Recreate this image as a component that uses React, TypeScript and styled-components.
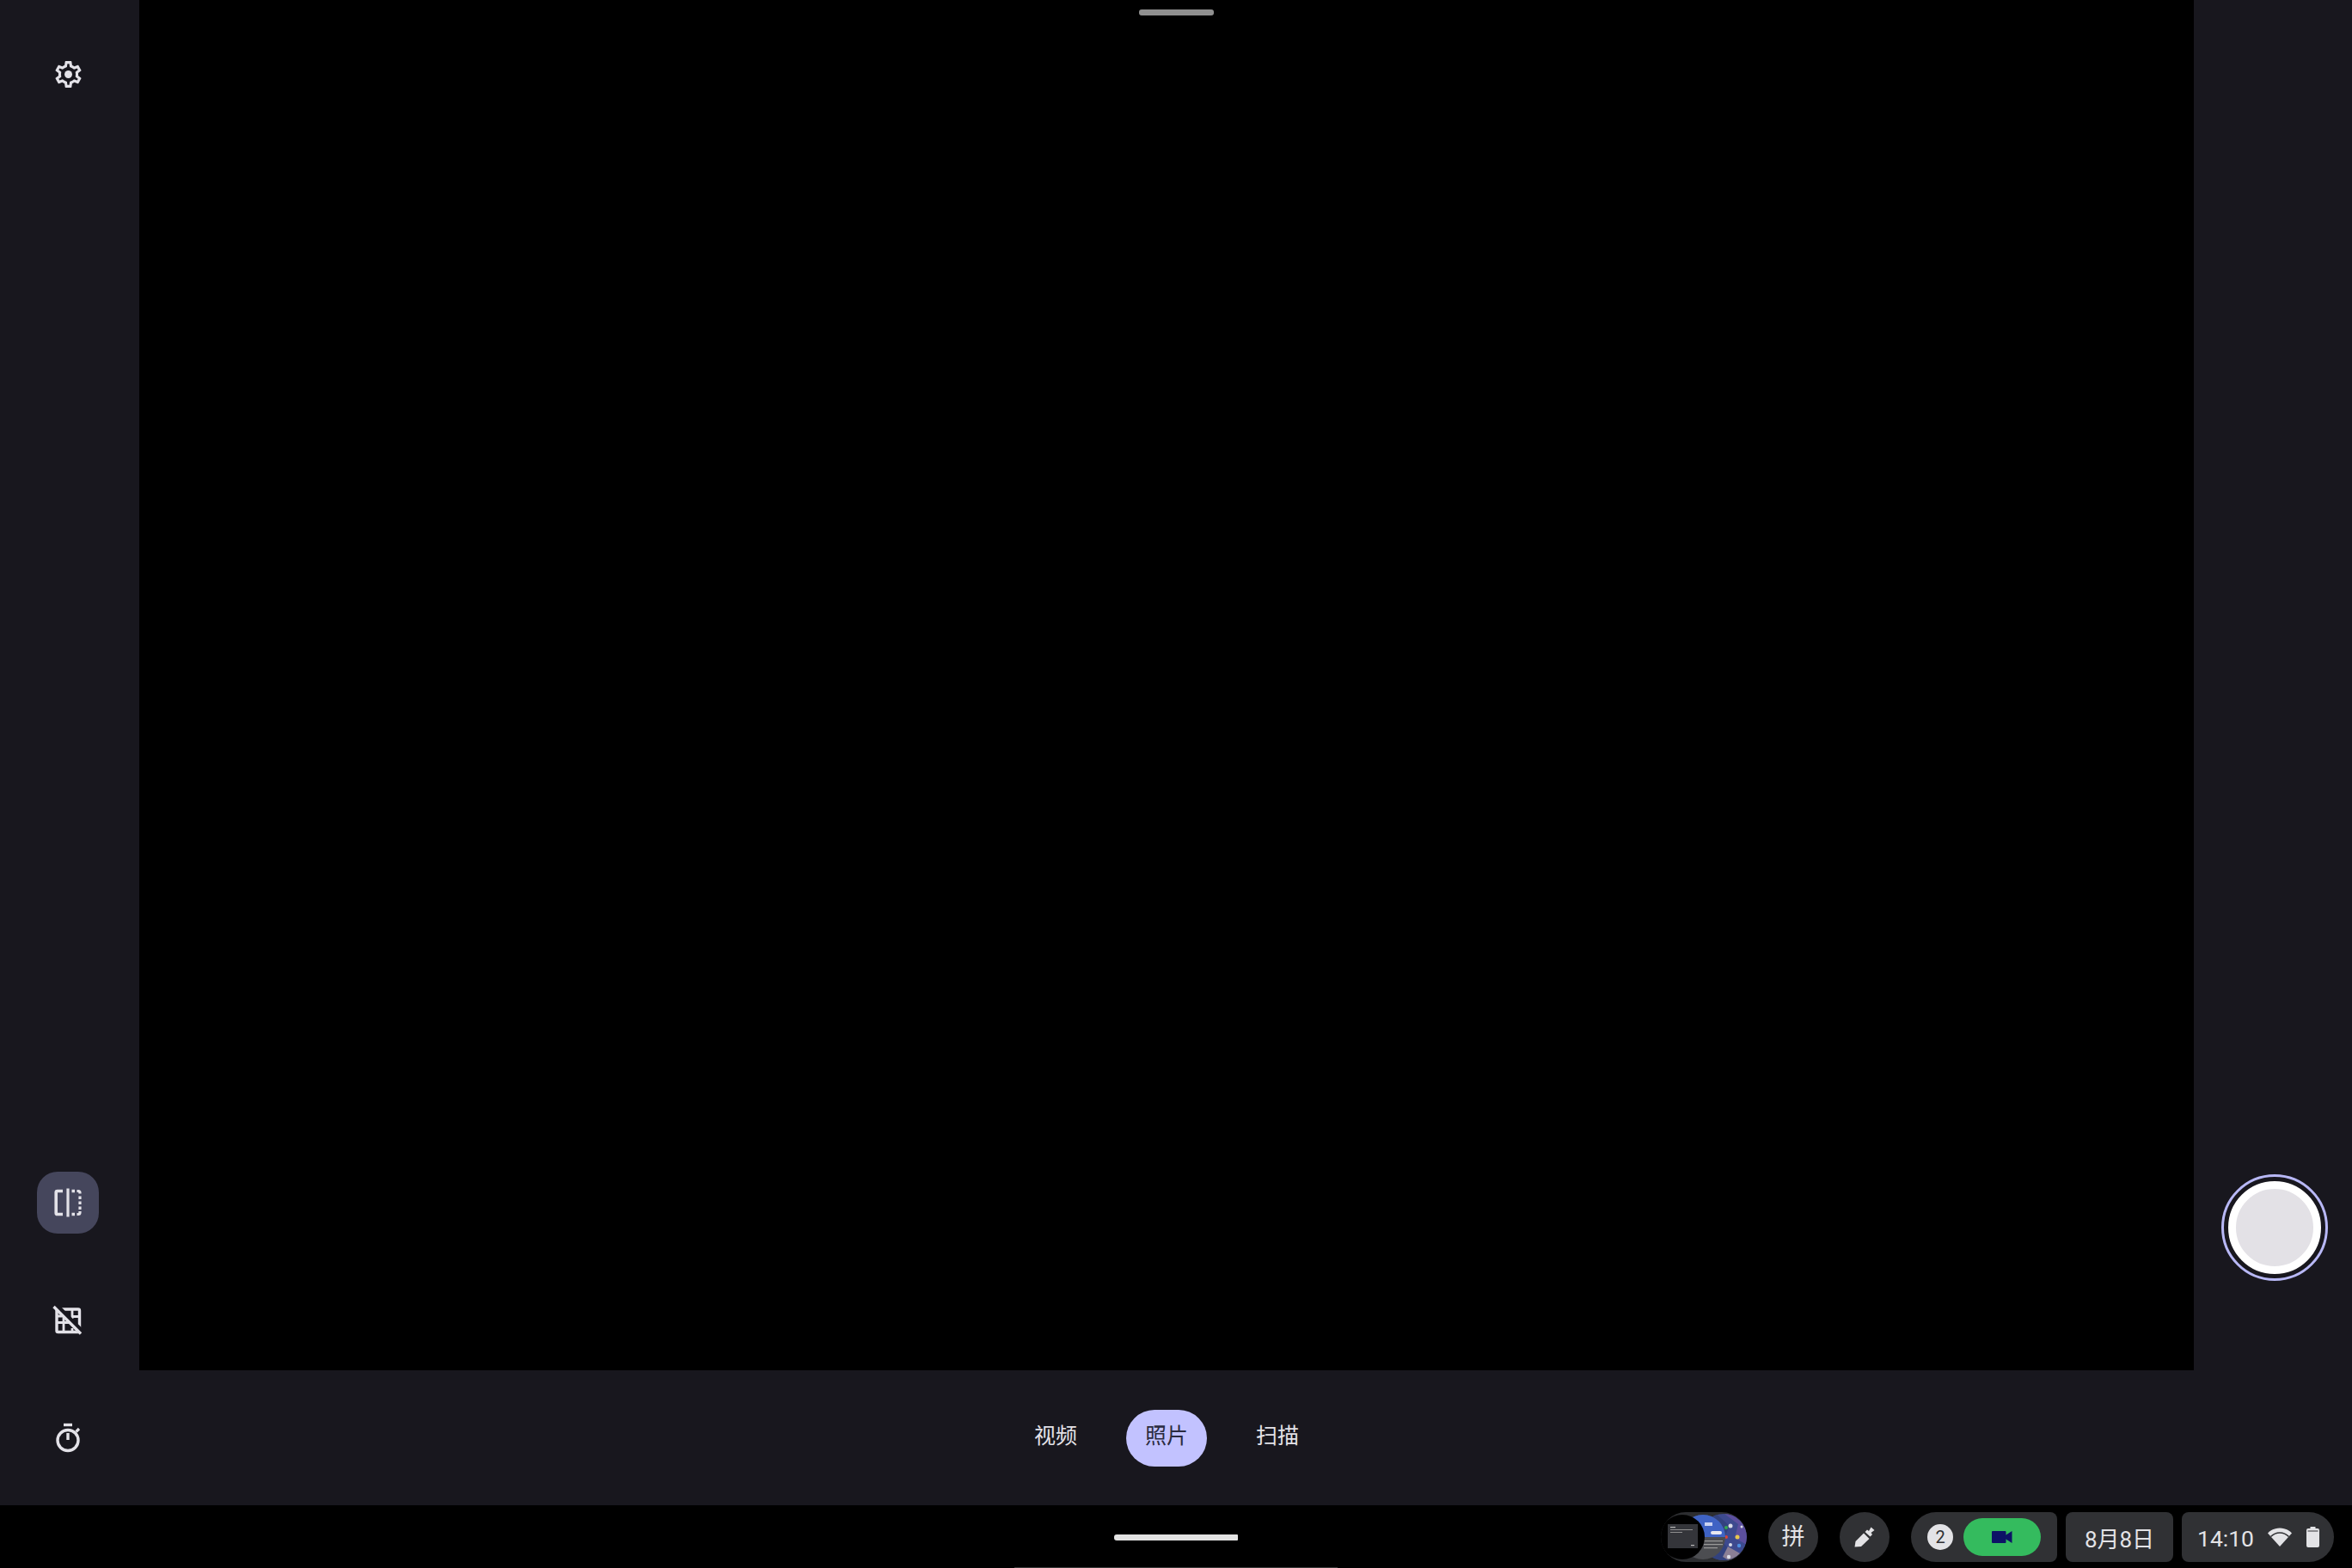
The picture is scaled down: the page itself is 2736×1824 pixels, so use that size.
import React from "react";
import styled, { createGlobalStyle } from "styled-components";

const Global = createGlobalStyle`
  html, body { margin: 0; padding: 0; background: #000; }
  body { font-family: "Roboto", "Noto Sans CJK SC", sans-serif; }
`;

const Screen = styled.div`
  position: relative;
  width: 2736px;
  height: 1824px;
  display: flex;
  flex-direction: column;
  overflow: hidden;
  background: #000;
`;

const Workspace = styled.div`
  height: 1751px;
  display: flex;
  background: #18171e;
`;

const LeftRail = styled.aside`
  width: 162px;
  display: flex;
  flex-direction: column;
  align-items: center;
  padding: 50px 4px 42px 0;
  box-sizing: border-box;
`;

const RailButton = styled.button<{ $active?: boolean }>`
  width: 72px;
  height: 72px;
  flex: none;
  padding: 0;
  border: 0;
  border-radius: 24px;
  display: flex;
  align-items: center;
  justify-content: center;
  color: #e3e2e8;
  background: ${(p) => (p.$active ? "#45465c" : "transparent")};
`;

const BottomTools = styled.div`
  margin-top: auto;
  display: flex;
  flex-direction: column;
  gap: 65px;
`;

const Center = styled.main`
  flex: 1;
  display: flex;
  flex-direction: column;
`;

const Preview = styled.div`
  position: relative;
  height: 1594px;
  background: #000;
`;

const Handle = styled.div`
  position: absolute;
  top: 11px;
  left: 1163px;
  width: 87px;
  height: 7px;
  border-radius: 3px;
  background: #8f8f8f;
`;

const ModeBar = styled.nav`
  flex: 1;
  display: flex;
  justify-content: center;
  align-items: flex-start;
  padding-top: 46px;
  gap: 35px;
`;

const Mode = styled.div<{ $active?: boolean }>`
  width: 94px;
  height: 66px;
  box-sizing: border-box;
  padding-bottom: 10px;
  border-radius: 33px;
  display: flex;
  align-items: center;
  justify-content: center;
  font-family: "Noto Sans CJK SC", sans-serif;
  font-size: 25px;
  color: ${(p) => (p.$active ? "#2b2b40" : "#e3e2e8")};
  background: ${(p) => (p.$active ? "#c2c2ff" : "transparent")};
`;

const RightRail = styled.aside`
  width: 184px;
  display: flex;
  justify-content: center;
  padding: 1366px 0 0 4px;
  box-sizing: border-box;
`;

const ShutterRing = styled.div`
  width: 124px;
  height: 124px;
  box-sizing: border-box;
  border: 3px solid #b8b8f6;
  border-radius: 50%;
  display: flex;
  align-items: center;
  justify-content: center;
`;

const ShutterFace = styled.div`
  width: 90px;
  height: 90px;
  border: 9px solid #fff;
  border-radius: 50%;
  background: #e3e1e6;
`;

const Shelf = styled.footer`
  position: relative;
  margin-top: 1px;
  height: 72px;
  display: flex;
  align-items: center;
  justify-content: flex-end;
  padding: 0 21px 0 0;
  box-sizing: border-box;
  background: #000;
`;

const HomeBar = styled.div`
  position: absolute;
  left: 1296px;
  top: 33px;
  width: 144px;
  height: 7px;
  border-radius: 3px 1px 1px 3px;
  background: #e3e3e3;
`;

const EdgeLine = styled.div`
  position: absolute;
  left: 1180px;
  bottom: 0;
  width: 376px;
  height: 1px;
  background: #3a3a3a;
`;

const Tray = styled.div`
  display: flex;
  align-items: center;
  height: 58px;
`;

const HoldingPod = styled.div`
  width: 100px;
  height: 58px;
  margin-right: 25px;
  border-radius: 29px;
  overflow: hidden;
  background: #2c2d30;
`;

const RoundPod = styled.div<{ $lift?: boolean }>`
  width: 58px;
  height: 58px;
  box-sizing: border-box;
  margin-right: 25px;
  padding-bottom: ${(p) => (p.$lift ? "6px" : "0")};
  border-radius: 50%;
  display: flex;
  align-items: center;
  justify-content: center;
  font-family: "Noto Sans CJK SC", sans-serif;
  font-size: 27px;
  color: #e3e3e6;
  background: #303134;
`;

const NotifyPod = styled.div`
  width: 170px;
  height: 58px;
  margin-right: 10px;
  box-sizing: border-box;
  padding-left: 19px;
  border-radius: 29px 8px 8px 29px;
  display: flex;
  align-items: center;
  gap: 12px;
  background: #303134;
`;

const CountBadge = styled.div`
  width: 30px;
  height: 30px;
  border-radius: 50%;
  display: flex;
  align-items: center;
  justify-content: center;
  font-size: 20px;
  color: #303134;
  background: #e3e3e6;
`;

const RecordingPill = styled.div`
  width: 90px;
  height: 44px;
  border-radius: 22px;
  display: flex;
  align-items: center;
  justify-content: center;
  background: #34bb5e;
`;

const DatePod = styled.div`
  width: 125px;
  height: 58px;
  margin-right: 10px;
  border-radius: 8px;
  display: flex;
  align-items: center;
  justify-content: center;
  font-size: 26px;
  color: #e3e3e6;
  background: #303134;
`;

const StatusPod = styled.div`
  width: 177px;
  height: 58px;
  box-sizing: border-box;
  padding-left: 18px;
  border-radius: 8px 29px 29px 8px;
  display: flex;
  align-items: center;
  font-size: 26.5px;
  color: #e3e3e6;
  background: #303134;
`;

const Clock = styled.span`
  width: 66px;
  margin-right: 15px;
  padding-top: 2px;
`;

const BatterySlot = styled.span`
  display: flex;
  margin-left: 16px;
`;

const Gear = () => (
  <svg width="37" height="37" viewBox="0 0 24 24" fill="currentColor">
    <path d="M19.43 12.98c.04-.32.07-.64.07-.98 0-.34-.03-.66-.07-.98l2.11-1.65c.19-.15.24-.42.12-.64l-2-3.46c-.09-.16-.26-.25-.44-.25-.06 0-.12.01-.17.03l-2.49 1c-.52-.4-1.08-.73-1.69-.98l-.38-2.65C14.46 2.18 14.25 2 14 2h-4c-.25 0-.46.18-.49.42l-.38 2.65c-.61.25-1.17.59-1.69.98l-2.49-1c-.06-.02-.12-.03-.18-.03-.17 0-.34.09-.43.25l-2 3.46c-.13.22-.07.49.12.64l2.11 1.65c-.04.32-.07.65-.07.98 0 .33.03.66.07.98l-2.11 1.65c-.19.15-.24.42-.12.64l2 3.46c.09.16.26.25.44.25.06 0 .12-.01.17-.03l2.49-1c.52.4 1.08.73 1.69.98l.38 2.65c.03.24.24.42.49.42h4c.25 0 .46-.18.49-.42l.38-2.65c.61-.25 1.17-.59 1.69-.98l2.49 1c.06.02.12.03.18.03.17 0 .34-.09.43-.25l2-3.46c.12-.22.07-.49-.12-.64l-2.11-1.65zm-1.98-1.71c.04.31.05.52.05.73 0 .21-.02.43-.05.73l-.14 1.13.89.7 1.08.84-.7 1.21-1.27-.51-1.04-.42-.9.68c-.43.32-.84.56-1.25.73l-1.06.43-.16 1.13-.2 1.35h-1.4l-.19-1.35-.16-1.13-1.06-.43c-.43-.18-.83-.41-1.23-.71l-.91-.7-1.06.43-1.27.51-.7-1.21 1.08-.84.89-.7-.14-1.13c-.03-.31-.05-.54-.05-.74s.02-.43.05-.73l.14-1.13-.89-.7-1.08-.84.7-1.21 1.27.51 1.04.42.9-.68c.43-.32.84-.56 1.25-.73l1.06-.43.16-1.13.2-1.35h1.39l.19 1.35.16 1.13 1.06.43c.43.18.83.41 1.23.71l.91.7 1.06-.43 1.27-.51.7 1.21-1.07.85-.89.7.14 1.13z" />
    <circle cx="12" cy="12" r="2.9" />
  </svg>
);

const Mirror = () => (
  <svg width="36" height="36" viewBox="0 0 36 36" fill="none" stroke="currentColor">
    <path d="M12 4.500H5.800a1.600 1.600 0 0 0-1.600 1.600v23.800a1.600 1.600 0 0 0 1.600 1.600H12" strokeWidth="3.600" />
    <path d="M18 1.500v33" strokeWidth="3.200" />
    <path d="M22.500 4.500h3.500M22.500 31.500h3.500" strokeWidth="3.400" />
    <path d="M28.500 4.500h1.500a2 2 0 0 1 2 2v1M32 10.500v3.500M32 16.500v3.500M32 22.500v3.500M32 28v1.500a2 2 0 0 1-2 2h-1.500" strokeWidth="3.200" />
  </svg>
);

const GridOff = () => (
  <svg width="36" height="36" viewBox="0 0 36 36" fill="none" stroke="currentColor">
    <rect x="5" y="5" width="26.500" height="26.500" rx="1.500" strokeWidth="3.400" />
    <path d="M5 20.500h14M13 14v17M23 4v12M23 27v4M24 13.500h7M5 13h6M24 24h7" strokeWidth="2.800" />
    <path d="M3 3 33 33.500" stroke="#18171e" strokeWidth="7" transform="translate(1.500 -1.500)" />
    <path d="M1.500 2 33 33.500" strokeWidth="3.400" />
  </svg>
);

const TimerIcon = () => (
  <svg width="36" height="36" viewBox="0 0 36 36" fill="none" stroke="currentColor">
    <circle cx="18" cy="20.500" r="12" strokeWidth="3.400" />
    <path d="M13 2.500h10" strokeWidth="3.400" />
    <path d="M18 12v8" strokeWidth="3.400" />
    <path d="M27.500 10.500l3.500-3.500" strokeWidth="3.200" />
  </svg>
);

const Pen = () => (
  <svg width="24" height="24" viewBox="0 0 24 24" fill="#e3e3e6">
    <path d="M.5 23.500 1.500 17 11 7.500l6.500 6.500L8 23z" />
    <path d="M12.500 6 15 3.500l2 1.500 2.500-4.500 4 3.500-4 3 1.500 2-2.500 2.500z" />
  </svg>
);

const Camera = () => (
  <svg width="24" height="14" viewBox="0 0 24 14" fill="#0d1266">
    <rect x="0" y="0" width="16.500" height="14" rx="1" />
    <path d="M15 5.500 23.500 0v14L15 8.500z" />
  </svg>
);

const Wifi = () => (
  <svg width="30" height="24" viewBox="0 0 30 24">
    <path d="M1 7.500C4.500 3.700 9.500 1.500 15 1.500s10.500 2.200 14 6L15 23z" fill="#e3e3e6" />
    <path d="M4.500 11.500C7.300 8.700 11 7 15 7s7.700 1.700 10.500 4.500" fill="none" stroke="#303134" strokeWidth="1.600" />
  </svg>
);

const Battery = () => (
  <svg width="15" height="24" viewBox="0 0 15 24">
    <path d="M4.500 0h6v2h2.500a2 2 0 0 1 2 2v18a2 2 0 0 1-2 2H2a2 2 0 0 1-2-2V4a2 2 0 0 1 2-2h2.500z" fill="#e3e3e6" />
    <path d="M1.500 5h12" stroke="#303134" strokeWidth="1" />
  </svg>
);

const Thumbnails = () => (
  <svg width="100" height="58" viewBox="0 0 100 58">
    <defs>
      <clipPath id="mapClip"><circle cx="73" cy="29" r="27" /></clipPath>
      <clipPath id="midClip"><circle cx="49" cy="29" r="26" /></clipPath>
    </defs>
    <g clipPath="url(#mapClip)">
      <rect x="40" y="0" width="70" height="58" fill="#3d4a8f" />
      <path d="M62 0 80 16 72 34 90 58H50V0z" fill="#32427f" />
      <path d="M74 2 90 14 86 30 100 38V2z" fill="#5c4f9e" />
      <path d="M78 40 92 48 82 58 72 52z" fill="#8a7f95" />
      <circle cx="81" cy="16" r="2.500" fill="#d9dbe6" />
      <circle cx="89" cy="29" r="2.500" fill="#e8c84e" />
      <circle cx="94" cy="17" r="1.500" fill="#d9dbe6" />
      <circle cx="91" cy="39" r="2.200" fill="#4d8fe0" />
      <circle cx="79" cy="52" r="2.200" fill="#d9dbe6" />
      <circle cx="81" cy="38" r="2" fill="#d9dbe6" />
      <circle cx="76" cy="18" r="2" fill="#34a853" />
      <circle cx="76" cy="29" r="2" fill="#d9443a" />
    </g>
    <g clipPath="url(#midClip)">
      <rect x="24" y="0" width="52" height="58" fill="#4c4d51" />
      <rect x="24" y="0" width="52" height="29" fill="#3f63c4" />
      <rect x="58" y="22" width="13" height="4" rx="2" fill="#e8e8f0" />
      <rect x="51" y="12" width="9" height="4" fill="#c9d3f2" />
      <rect x="50" y="33" width="22" height="1.200" fill="#9a9a9a" />
      <rect x="50" y="37" width="22" height="1.200" fill="#9a9a9a" />
      <rect x="50" y="41" width="16" height="1.200" fill="#9a9a9a" />
    </g>
    <circle cx="25" cy="29" r="26" fill="#000" />
    <rect x="8" y="14" width="35" height="28" fill="#34353a" />
    <rect x="11" y="17" width="6" height="1.200" fill="#b8b8b8" />
    <rect x="11" y="20" width="26" height="1" fill="#909090" />
    <rect x="11" y="23" width="14" height="1" fill="#909090" />
    <rect x="35" y="38" width="4" height="1.200" fill="#b8b8b8" />
  </svg>
);

export default function App() {
  return (
    <Screen>
      <Global />
      <Workspace>
        <LeftRail>
          <RailButton><Gear /></RailButton>
          <BottomTools>
            <RailButton $active><Mirror /></RailButton>
            <RailButton><GridOff /></RailButton>
            <RailButton><TimerIcon /></RailButton>
          </BottomTools>
        </LeftRail>
        <Center>
          <Preview><Handle /></Preview>
          <ModeBar>
            <Mode>视频</Mode>
            <Mode $active>照片</Mode>
            <Mode>扫描</Mode>
          </ModeBar>
        </Center>
        <RightRail>
          <ShutterRing><ShutterFace /></ShutterRing>
        </RightRail>
      </Workspace>
      <Shelf>
        <HomeBar />
        <EdgeLine />
        <Tray>
          <HoldingPod><Thumbnails /></HoldingPod>
          <RoundPod $lift>拼</RoundPod>
          <RoundPod><Pen /></RoundPod>
          <NotifyPod>
            <CountBadge>2</CountBadge>
            <RecordingPill><Camera /></RecordingPill>
          </NotifyPod>
          <DatePod>8月8日</DatePod>
          <StatusPod>
            <Clock>14:10</Clock>
            <Wifi />
            <BatterySlot><Battery /></BatterySlot>
          </StatusPod>
        </Tray>
      </Shelf>
    </Screen>
  );
}
